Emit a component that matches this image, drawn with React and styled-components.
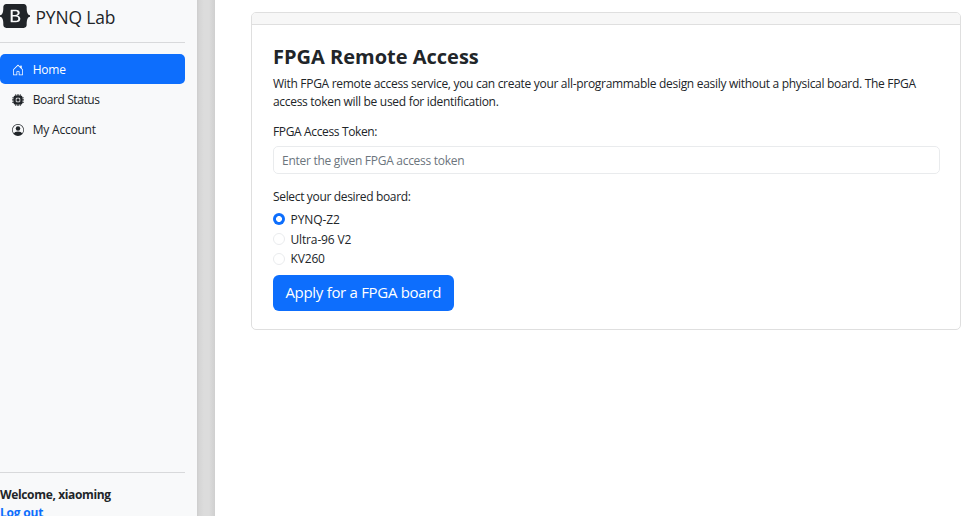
import React, { useState } from "react";
import styled, { createGlobalStyle } from "styled-components";
import { BsHouseDoor, BsCpuFill, BsPersonCircle } from "react-icons/bs";

const GlobalStyle = createGlobalStyle`
  *, *::before, *::after { box-sizing: border-box; }
  html, body { margin: 0; overflow: hidden; }
  body {
    font-family: "Segoe UI", "Open Sans", "Noto Sans", sans-serif;
    font-size: 12px;
    line-height: 18px;
    color: #212529;
    background: #fff;
  }
`;

const Page = styled.div`
  display: flex;
  height: 516px;
  overflow: hidden;
`;

const Sidebar = styled.aside`
  display: flex;
  flex-direction: column;
  flex: none;
  width: 197px;
  padding: 4px 12px 0 0;
  background: #f8f9fa;
`;

const Brand = styled.a`
  display: flex;
  flex: none;
  align-items: center;
  gap: 5.5px;
  height: 26px;
  color: #212529;
  font-size: 17.4px;
  letter-spacing: -0.1px;
  white-space: nowrap;
`;

const Logo = styled.svg`
  flex: none;
  width: 30px;
  height: 24px;
  margin-bottom: 2px;
`;

const Rule = styled.hr`
  flex: none;
  width: 100%;
  height: 1px;
  margin: ${(p) => (p.$bottom ? "0 0 13px" : "12px 0 11px")};
  border: 0;
  background: #d8d9db;
`;

const Nav = styled.nav`
  display: flex;
  flex-direction: column;
  flex: none;
  height: 418px;
`;

const NavItem = styled.a`
  display: flex;
  align-items: center;
  gap: 9px;
  height: 30px;
  padding: 1px 11px 0;
  border-radius: 5px;
  letter-spacing: ${(p) => p.$tracking}px;
  color: ${(p) => (p.$active ? "#fff" : "#212529")};
  background: ${(p) => (p.$active ? "#0d6efd" : "transparent")};

  svg { flex: none; width: 12px; height: 12px; margin: 0 0.25px 0 0.5px; }
`;

const Account = styled.div`
  font-weight: 700;
  letter-spacing: -0.35px;
  white-space: nowrap;
`;

const LogoutLink = styled.a`
  display: block;
  letter-spacing: -0.2px;
  color: #0d6efd;
`;

const Divider = styled.div`
  flex: none;
  width: 18px;
  background: linear-gradient(to right, #cdcdcd 0, #d5d5d5 2px, #dcdcdc 7px, #dcdcdc 12px, #cfcfcf 18px);
`;

const Main = styled.main`
  flex: 1;
  padding: 12px 1px 0 36px;
`;

const Card = styled.section`
  height: 318px;
  border: 1px solid #dfdfdf;
  border-radius: 5px;
  overflow: hidden;
`;

const CardHeader = styled.div`
  height: 12px;
  border-bottom: 1px solid #dfdfdf;
  background: #f7f7f7;
`;

const CardBody = styled.form`
  padding: 19px 20px 0 21px;
`;

const Title = styled.h1`
  margin: 0 0 5px;
  font-size: 20px;
  line-height: 26px;
  font-weight: 700;
`;

const Text = styled.div`
  height: 18px;
  white-space: nowrap;
  letter-spacing: -0.3px;
`;

const Label = styled.label`
  display: block;
  margin-top: ${(p) => p.$top}px;
  letter-spacing: ${(p) => p.$tracking}px;
`;

const TokenInput = styled.input`
  display: block;
  width: 100%;
  height: 28px;
  margin-top: 5px;
  padding: 1px 8px 0;
  border: 1px solid #e9ebed;
  border-radius: 5px;
  font: inherit;
  letter-spacing: -0.28px;
  outline: none;

  &::placeholder { color: #6c757d; opacity: 1; }
`;

const Options = styled.div`
  display: flex;
  flex-direction: column;
  margin-top: 4px;
`;

const Option = styled.label`
  display: flex;
  align-items: center;
  gap: 5.5px;
  height: 19.75px;
  letter-spacing: ${(p) => p.$tracking}px;
`;

const Radio = styled.input`
  appearance: none;
  flex: none;
  width: 12px;
  height: 12px;
  margin: 0 0 1.6px;
  border: 1px solid #e9ebed;
  border-radius: 50%;
  background: #fff;

  &:checked { border: 0; background: radial-gradient(circle, #fff 2.6px, #0d6efd 3.3px); }
`;

const ApplyButton = styled.button`
  display: block;
  width: 180.5px;
  height: 36.5px;
  margin-top: 5.25px;
  padding: 0 0 1px;
  border: 0;
  border-radius: 6px;
  background: #0d6efd;
  color: #fff;
  font: inherit;
  font-size: 15px;
  letter-spacing: -0.3px;
  white-space: nowrap;
`;

const NAV_ITEMS = [
  { label: "Home", Icon: BsHouseDoor, tracking: -0.25 },
  { label: "Board Status", Icon: BsCpuFill, tracking: -0.43 },
  { label: "My Account", Icon: BsPersonCircle, tracking: -0.22 },
];

const BOARDS = [
  { label: "PYNQ-Z2", tracking: -0.08 },
  { label: "Ultra-96 V2", tracking: -0.15 },
  { label: "KV260", tracking: -0.15 },
];

function BrandLogo() {
  return (
    <Logo viewBox="0 0 118 94" fill="currentColor" aria-hidden="true">
      <path
        fillRule="evenodd"
        clipRule="evenodd"
        d="M24.509 0c-6.733 0-11.715 5.893-11.492 12.284.214 6.14-.064 14.092-2.066 20.577C8.943 39.365 5.547 43.485 0 44.014v5.972c5.547.529 8.943 4.649 10.951 11.153 2.002 6.485 2.28 14.437 2.066 20.577C12.794 88.106 17.776 94 24.51 94H93.5c6.733 0 11.714-5.893 11.491-12.284-.214-6.14.064-14.092 2.066-20.577 2.009-6.504 5.396-10.624 10.943-11.153v-5.972c-5.547-.529-8.934-4.649-10.943-11.153-2.002-6.484-2.28-14.437-2.066-20.577C105.214 5.894 100.233 0 93.5 0H24.508zM80 57.863C80 66.663 73.436 72 62.543 72H44a2 2 0 01-2-2V24a2 2 0 012-2h18.437c9.083 0 15.044 4.92 15.044 12.474 0 5.302-4.01 10.049-9.119 10.88v.277C75.317 46.394 80 51.21 80 57.863zM60.521 28.34H49.948v14.934h8.905c6.884 0 10.68-2.772 10.68-7.727 0-4.643-3.264-7.207-9.012-7.207zM49.948 49.2v16.458H60.91c7.167 0 10.964-2.876 10.964-8.281 0-5.406-3.903-8.178-11.425-8.178H49.948z"
      />
    </Logo>
  );
}

export default function App() {
  const [board, setBoard] = useState("PYNQ-Z2");
  return (
    <>
      <GlobalStyle />
      <Page>
        <Sidebar>
          <Brand>
            <BrandLogo />
            <span>PYNQ Lab</span>
          </Brand>
          <Rule />
          <Nav>
            {NAV_ITEMS.map(({ label, Icon, tracking }) => (
              <NavItem key={label} $active={label === "Home"} $tracking={tracking}>
                <Icon />
                <span>{label}</span>
              </NavItem>
            ))}
          </Nav>
          <Rule $bottom />
          <Account>
            <span>Welcome, xiaoming</span>
            <LogoutLink>Log out</LogoutLink>
          </Account>
        </Sidebar>
        <Divider />
        <Main>
          <Card>
            <CardHeader />
            <CardBody onSubmit={(e) => e.preventDefault()}>
              <Title>FPGA Remote Access</Title>
              <Text>
                With FPGA remote access service, you can create your all-programmable design easily without a physical board. The FPGA
              </Text>
              <Text>access token will be used for identification.</Text>
              <Label $top={12} $tracking={-0.36} htmlFor="token">FPGA Access Token:</Label>
              <TokenInput id="token" placeholder="Enter the given FPGA access token" />
              <Label as="div" $top={14} $tracking={-0.34}>Select your desired board:</Label>
              <Options>
                {BOARDS.map(({ label, tracking }) => (
                  <Option key={label} $tracking={tracking}>
                    <Radio
                      type="radio"
                      name="board"
                      checked={board === label}
                      onChange={() => setBoard(label)}
                    />
                    <span>{label}</span>
                  </Option>
                ))}
              </Options>
              <ApplyButton type="submit">Apply for a FPGA board</ApplyButton>
            </CardBody>
          </Card>
        </Main>
      </Page>
    </>
  );
}
